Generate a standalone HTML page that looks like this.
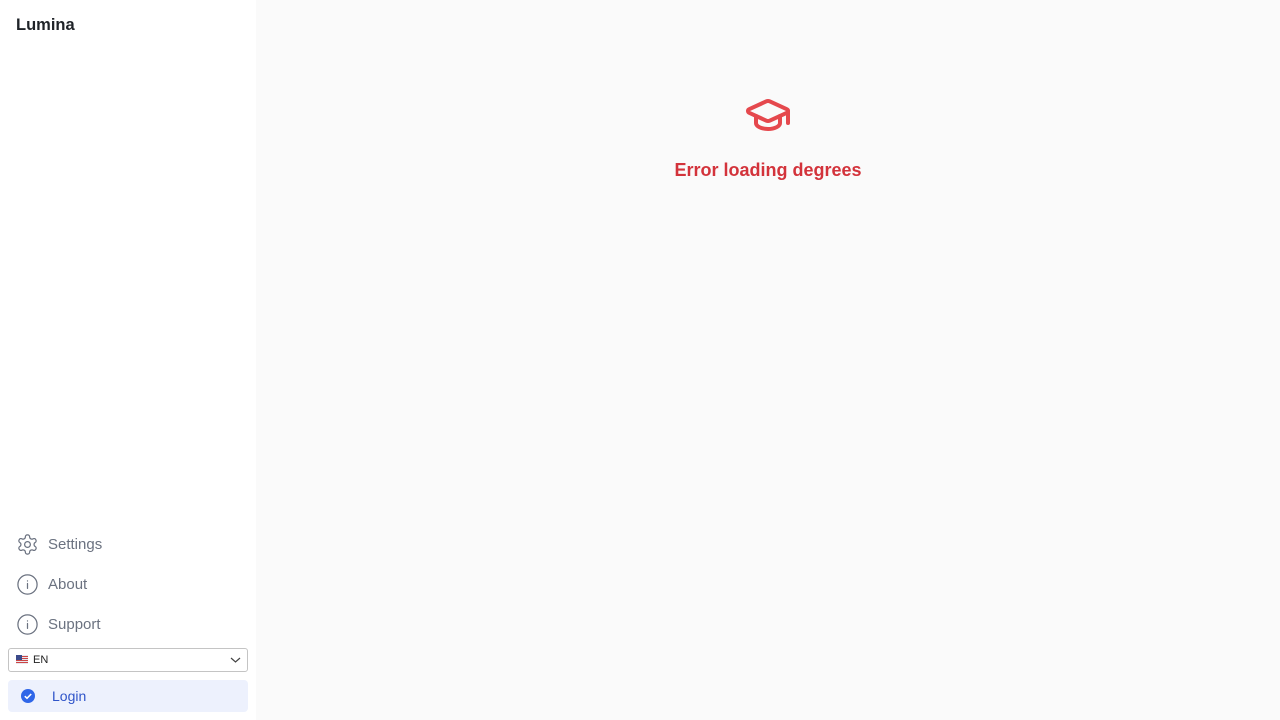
<!DOCTYPE html>
<html><head><meta charset="utf-8"><style>
body{margin:0;width:1280px;height:720px;font-family:"Liberation Sans",sans-serif;background:#fafafa;position:relative;overflow:hidden}
.side{position:absolute;left:0;top:0;width:256px;height:720px;background:#fff}
.logo{position:absolute;left:16px;top:16px;font-size:16.5px;font-weight:bold;color:#1f2328}
.item{position:absolute;left:16px;height:24px;display:flex;align-items:center;color:#6b7280;font-size:15px}
.item svg{margin-right:9px}
.sel{position:absolute;left:8px;top:648px;width:238px;height:22px;border:1px solid #c4c4c4;border-radius:3px;background:#fff;font-size:11px;color:#222}
.login{position:absolute;left:8px;top:680px;width:240px;height:32px;background:#edf1fd;border-radius:4px;color:#2f54c9;font-size:14px}
.err{position:absolute;left:512px;width:512px;text-align:center;top:160px;font-size:18px;font-weight:bold;color:#d3333b}
</style></head><body>
<div class="side">
<div class="logo">Lumina</div>
<div class="item" style="top:532px"><svg width="23" height="23" viewBox="0 0 24 24" fill="none" stroke="#6b7280" stroke-width="1.3" stroke-linejoin="round"><path d="M12.22 2h-.44a2 2 0 0 0-2 2v.18a2 2 0 0 1-1 1.73l-.43.25a2 2 0 0 1-2 0l-.15-.08a2 2 0 0 0-2.730.73l-.22.38a2 2 0 0 0 .73 2.73l.15.1a2 2 0 0 1 1 1.72v.51a2 2 0 0 1-1 1.74l-.15.09a2 2 0 0 0-.73 2.73l.22.38a2 2 0 0 0 2.73.73l.15-.08a2 2 0 0 1 2 0l.43.25a2 2 0 0 1 1 1.73V20a2 2 0 0 0 2 2h.44a2 2 0 0 0 2-2v-.18a2 2 0 0 1 1-1.73l.43-.25a2 2 0 0 1 2 0l.15.08a2 2 0 0 0 2.73-.73l.22-.39a2 2 0 0 0-.73-2.730l-.15-.08a2 2 0 0 1-1-1.74v-.5a2 2 0 0 1 1-1.74l.15-.09a2 2 0 0 0 .73-2.73l-.22-.38a2 2 0 0 0-2.73-.73l-.15.08a2 2 0 0 1-2 0l-.43-.25a2 2 0 0 1-1-1.73V4a2 2 0 0 0-2-2z"/><circle cx="12" cy="12" r="3"/></svg>Settings</div>
<div class="item" style="top:572px"><svg width="23" height="23" viewBox="0 0 24 24" fill="none" stroke="#6b7280" stroke-width="1.3"><circle cx="12" cy="12" r="10"/><path d="M12 11v5M12 8.2v.1" stroke-linecap="round"/></svg>About</div>
<div class="item" style="top:612px"><svg width="23" height="23" viewBox="0 0 24 24" fill="none" stroke="#6b7280" stroke-width="1.3"><circle cx="12" cy="12" r="10"/><path d="M12 11v5M12 8.2v.1" stroke-linecap="round"/></svg>Support</div>
<div class="sel"><svg style="position:absolute;left:7px;top:6px" width="12" height="9" viewBox="0 0 12 9"><rect width="12" height="9" fill="#e8e8ee"/><rect y="1" width="12" height="1" fill="#c44"/><rect y="3" width="12" height="1" fill="#c44"/><rect y="5" width="12" height="1" fill="#c44"/><rect y="7" width="12" height="1" fill="#c44"/><rect width="6" height="5" fill="#3b4a8a"/></svg><span style="position:absolute;left:24px;top:5px">EN</span><svg style="position:absolute;right:6px;top:7px" width="11" height="8" viewBox="0 0 11 8"><path d="M1 2l4.5 4L10 2" fill="none" stroke="#444" stroke-width="1.2"/></svg></div>
<div class="login"><svg style="position:absolute;left:13px;top:9px" width="14" height="14" viewBox="0 0 14 14"><circle cx="7" cy="7" r="7" fill="#2f66e8"/><path d="M3.8 7.2l2.2 2.1 4.2-4.3" fill="none" stroke="#fff" stroke-width="1.6"/></svg><span style="position:absolute;left:44px;top:8px">Login</span></div>
</div>
<svg style="position:absolute;left:744px;top:91px" width="48" height="48" viewBox="0 0 24 24" fill="none" stroke="#e5484d" stroke-width="2" stroke-linecap="round" stroke-linejoin="round"><path d="M21.42 10.922a1 1 0 0 0-.019-1.838L12.83 5.18a2 2 0 0 0-1.66 0L2.6 9.08a1 1 0 0 0 0 1.832l8.57 3.908a2 2 0 0 0 1.66 0z"/><path d="M22 10v6"/><path d="M6 12.5V16a6 3 0 0 0 12 0v-3.5"/></svg>
<div class="err">Error loading degrees</div>
</body></html>
